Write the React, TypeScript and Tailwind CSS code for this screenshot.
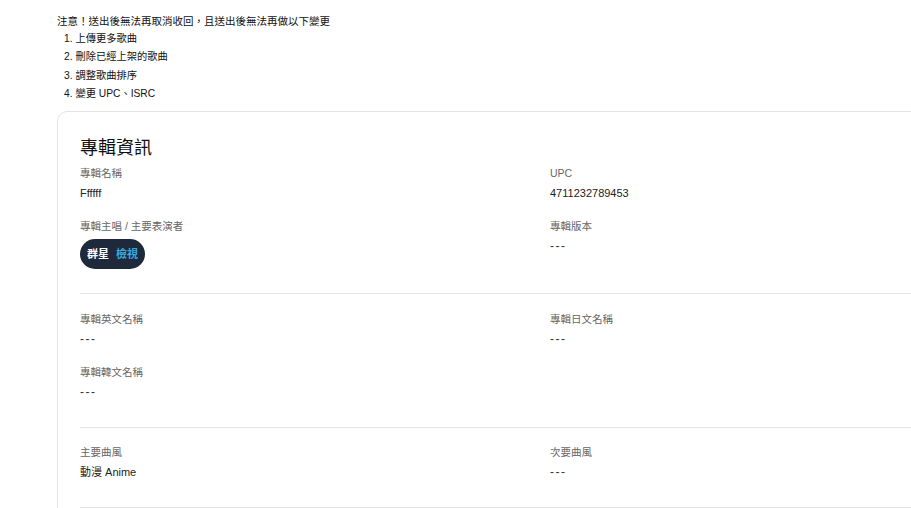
import React from 'react';

const font = { fontFamily: '"Liberation Sans", "Noto Sans CJK TC", sans-serif' };

type FieldProps = { label: string; value?: string };

function Field({ label, value }: FieldProps) {
  return (
    <div className="flex flex-col">
      <span className="text-[10.5px] leading-4 text-[#666666]">{label}</span>
      {value ? (
        <div className="mt-1 text-[11px] leading-4 text-[#222222]">{value}</div>
      ) : (
        <div className="mt-1 text-[12px] leading-4 tracking-[1.5px] text-[#333333]">---</div>
      )}
    </div>
  );
}

export default function App() {
  return (
    <div className="w-[911px] h-[508px] overflow-hidden bg-white" style={font}>
      <div className="pt-[13px] pl-[57px]">
        <p className="text-[10.5px] leading-4 text-[#111111]">注意！送出後無法再取消收回，且送出後無法再做以下變更</p>
        <ol className="mt-[1px] pl-[7px] text-[10.25px] leading-[18.3px] text-[#111111]">
          <li>1. 上傳更多歌曲</li>
          <li>2. 刪除已經上架的歌曲</li>
          <li>3. 調整歌曲排序</li>
          <li>4. 變更 UPC、ISRC</li>
        </ol>

        <div className="mt-[8px] w-[963px] rounded-tl-[10px] border border-[#e4e4e7] px-[22px]">
          {/* 基本資訊 */}
          <div className="pt-[22px] pb-[24px] border-b border-[#e5e5e5]">
            <h2 className="text-[18px] leading-7 text-[#111111]">專輯資訊</h2>
            <div className="mt-[3px] grid grid-cols-[470px_1fr] gap-y-[17px]">
              <Field label="專輯名稱" value="Ffffff" />
              <Field label="UPC" value="4711232789453" />
              <div className="flex flex-col">
                <span className="text-[10.5px] leading-4 text-[#666666]">專輯主唱 / 主要表演者</span>
                <div className="mt-[5px]">
                  <span className="inline-flex h-[30px] items-center gap-[7px] rounded-full bg-[#1e293b] px-[7px] text-[11px] font-bold">
                    <span className="text-white">群星</span>
                    <span className="text-[#38a9e0]">檢視</span>
                  </span>
                </div>
              </div>
              <Field label="專輯版本" />
            </div>
          </div>

          {/* 其他語言名稱 */}
          <div className="pt-[17px] pb-[27px] border-b border-[#e5e5e5]">
            <div className="grid grid-cols-[470px_1fr] gap-y-[17px]">
              <Field label="專輯英文名稱" />
              <Field label="專輯日文名稱" />
              <Field label="專輯韓文名稱" />
            </div>
          </div>

          {/* 曲風 */}
          <div className="pt-[16px] pb-[27px] border-b border-[#e5e5e5]">
            <div className="grid grid-cols-[470px_1fr] gap-y-[17px]">
              <Field label="主要曲風" value="動漫 Anime" />
              <Field label="次要曲風" />
            </div>
          </div>
          <div className="h-20" />
        </div>
      </div>
    </div>
  );
}
